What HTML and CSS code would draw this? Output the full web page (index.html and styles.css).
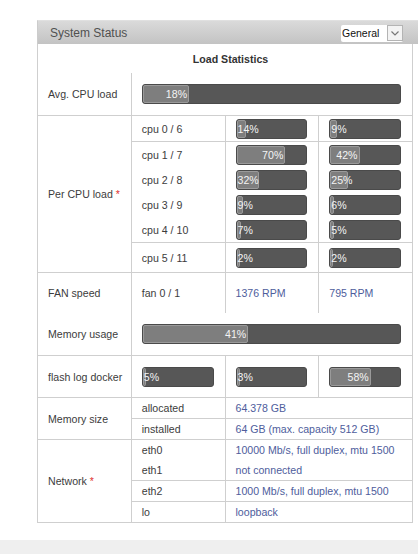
FILE: index.html
```html
<!DOCTYPE html>
<html>

<head>
    <title>System Status</title>
    <link rel="stylesheet" href="styles.css">
</head>

<body>
    <div class="panel">
        <!-- Panel title bar with the view selector -->
        <div class="panel-head">
            <span class="panel-title">System Status</span>
            <div class="select">
                <span class="select-text">General</span>
                <span class="select-btn">
                    <svg width="14" height="14" viewBox="0 0 14 14">
                        <polyline points="3.5,5.5 7,9 10.5,5.5" fill="none" stroke="#777" stroke-width="1.2" />
                    </svg>
                </span>
            </div>
        </div>

        <table class="stats">
            <colgroup>
                <col><col><col><col>
            </colgroup>

            <tr class="caption-row">
                <th colspan="4">Load Statistics</th>
            </tr>

            <tr class="wide-row">
                <td class="label">Avg. CPU load</td>
                <td colspan="3"><div class="bar"><div class="fill" style="width:18%">18%</div></div></td>
            </tr>

            <!-- Per CPU load -->
            <tr class="cpu-row first line">
                <td class="label" rowspan="6">Per CPU load <span class="req">*</span></td>
                <td>cpu 0 / 6</td>
                <td><div class="bar"><div class="fill" style="width:14%">14%</div></div></td>
                <td><div class="bar"><div class="fill" style="width:9%">9%</div></div></td>
            </tr>
            <tr class="cpu-row line">
                <td>cpu 1 / 7</td>
                <td><div class="bar"><div class="fill" style="width:70%">70%</div></div></td>
                <td><div class="bar"><div class="fill" style="width:42%">42%</div></div></td>
            </tr>
            <tr class="cpu-row">
                <td>cpu 2 / 8</td>
                <td><div class="bar"><div class="fill" style="width:32%">32%</div></div></td>
                <td><div class="bar"><div class="fill" style="width:25%">25%</div></div></td>
            </tr>
            <tr class="cpu-row">
                <td>cpu 3 / 9</td>
                <td><div class="bar"><div class="fill" style="width:9%">9%</div></div></td>
                <td><div class="bar"><div class="fill" style="width:6%">6%</div></div></td>
            </tr>
            <tr class="cpu-row">
                <td>cpu 4 / 10</td>
                <td><div class="bar"><div class="fill" style="width:7%">7%</div></div></td>
                <td><div class="bar"><div class="fill" style="width:5%">5%</div></div></td>
            </tr>
            <tr class="cpu-row last line">
                <td>cpu 5 / 11</td>
                <td><div class="bar"><div class="fill" style="width:2%">2%</div></div></td>
                <td><div class="bar"><div class="fill" style="width:2%">2%</div></div></td>
            </tr>

            <tr class="fan-row line">
                <td class="label">FAN speed</td>
                <td>fan 0 / 1</td>
                <td class="val">1376 RPM</td>
                <td class="val">795 RPM</td>
            </tr>

            <tr class="wide-row">
                <td class="label">Memory usage</td>
                <td colspan="3"><div class="bar"><div class="fill" style="width:41%">41%</div></div></td>
            </tr>

            <tr class="flash-row line">
                <td class="label">flash log docker</td>
                <td><div class="bar"><div class="fill" style="width:5%">5%</div></div></td>
                <td><div class="bar"><div class="fill" style="width:3%">3%</div></div></td>
                <td><div class="bar"><div class="fill" style="width:58%">58%</div></div></td>
            </tr>

            <!-- Memory size -->
            <tr class="info-row first line">
                <td class="label" rowspan="2">Memory size</td>
                <td>allocated</td>
                <td class="val" colspan="2">64.378 GB</td>
            </tr>
            <tr class="info-row line">
                <td>installed</td>
                <td class="val" colspan="2">64 GB (max. capacity 512 GB)</td>
            </tr>

            <!-- Network -->
            <tr class="info-row line">
                <td class="label" rowspan="4">Network <span class="req">*</span></td>
                <td>eth0</td>
                <td class="val" colspan="2">10000 Mb/s, full duplex, mtu 1500</td>
            </tr>
            <tr class="info-row">
                <td>eth1</td>
                <td class="val" colspan="2">not connected</td>
            </tr>
            <tr class="info-row line">
                <td>eth2</td>
                <td class="val" colspan="2">1000 Mb/s, full duplex, mtu 1500</td>
            </tr>
            <tr class="info-row line">
                <td>lo</td>
                <td class="val" colspan="2">loopback</td>
            </tr>
        </table>
    </div>

    <div class="footer"></div>
</body>
</html>
```

FILE: styles.css
```css
html,
body {
    overflow: hidden;
}

body {
    margin: 0;
    font-family: "Liberation Sans", Arial, sans-serif;
    font-size: 10.6px;
    color: #3c3c3c;
    background: #fff;
}

.panel {
    margin: 20px 0 0 37px;
}

/* Grey title bar */
.panel-head {
    display: flex;
    align-items: center;
    justify-content: space-between;
    box-sizing: border-box;
    height: 24px;
    padding: 0 15px 0 12px;
    border-top: 1px solid #e0e0e0;
    border-left: 1px solid #cccccc;
    background: linear-gradient(#dadada, #c3c3c3);
}

.panel-title {
    font-size: 12px;
    color: #505050;
}

.select {
    display: flex;
    align-items: center;
    justify-content: space-between;
    width: 62px;
    height: 17px;
    margin-top: 1px;
    padding-left: 1px;
    box-sizing: border-box;
    background: #fff;
    border-radius: 2px;
}

.select-text {
    font-size: 10.5px;
    color: #111;
}

.select-btn {
    display: flex;
    align-items: center;
    justify-content: center;
    width: 16px;
    height: 16px;
    box-sizing: border-box;
    border: 1px solid #b4b4b4;
    background: #f3f3f3;
}

/* Statistics table */
.stats {
    width: 376px;
    table-layout: fixed;
    border-collapse: collapse;
    border-left: 1px solid #cfcfcf;
    border-right: 1px solid #cfcfcf;
    border-bottom: 1px solid #cfcfcf;
}

.stats td {
    padding: 0 11px 0 10px;
    border-left: 1px solid #cfcfcf;
    border-right: 1px solid #cfcfcf;
    vertical-align: middle;
    white-space: nowrap;
}

.stats tr.line td {
    border-top: 1px solid #cfcfcf;
}

.caption-row th {
    height: 29px;
    padding: 0 0 0 11px;
    font-weight: bold;
    color: #333;
    text-align: center;
}

.wide-row td {
    height: 42px;
}

.cpu-row td {
    height: 25px;
}

.cpu-row.last td {
    height: 28px;
    padding-top: 1px;
}

.fan-row td {
    height: 40px;
}

.flash-row td {
    height: 41px;
}

.info-row td {
    height: 20px;
}

.stats td.label {
    color: #3c3c3c;
}

.val {
    color: #4e5d9c;
}

.req {
    color: #e03030;
}

/* Progress bars */
.bar {
    box-sizing: border-box;
    height: 20px;
    background: #575757;
    border: 1px solid #4a4a4a;
    border-radius: 3px;
    overflow: visible;
}

.fill {
    box-sizing: border-box;
    height: 100%;
    padding-right: 1px;
    background: #7e7e7e;
    border: 1px solid #9a9a9a;
    border-radius: 2px;
    color: #f4f4f4;
    line-height: 16px;
    text-align: right;
    white-space: nowrap;
}

.footer {
    height: 14px;
    margin-top: 17px;
    background: #efefef;
}
```
